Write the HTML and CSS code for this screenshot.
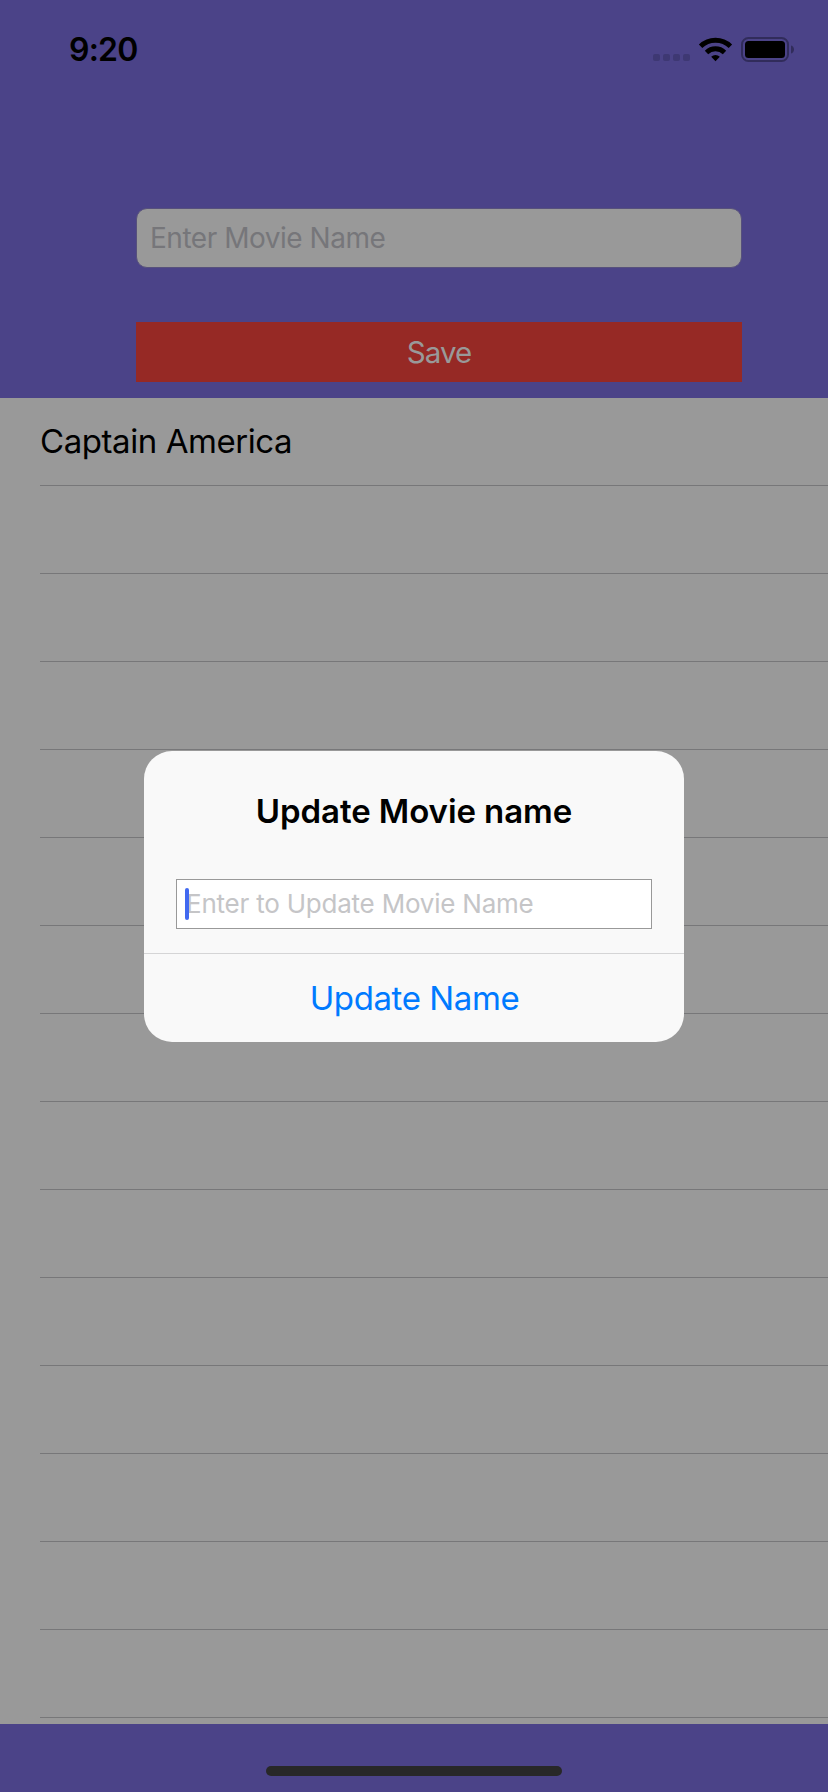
FILE: index.html
```html
<!DOCTYPE html>
<html lang="en">
<head>
<meta charset="utf-8">
<title>Movies</title>
<link rel="stylesheet" href="styles.css">
</head>
<body>
<div class="screen">
  <header class="header">
    <div class="status">
      <span class="time">9:20</span>
      <svg class="status-icons" width="142" height="26" viewBox="0 0 142 26">
        <g fill="#3e3873">
          <rect x="0" y="17" width="7" height="7" rx="2"/>
          <rect x="10" y="17" width="7" height="7" rx="2"/>
          <rect x="20" y="17" width="7" height="7" rx="2"/>
          <rect x="30" y="17" width="7" height="7" rx="2"/>
        </g>
        <g fill="none" stroke="#000" stroke-width="4.9">
          <path d="M47.6 9.3A21.3 21.3 0 0 1 77.4 9.3"/>
          <path d="M53.5 15.4A13 13 0 0 1 71.5 15.4"/>
        </g>
        <path d="M62.5 24.2L58.2 19.8A6.2 6.2 0 0 1 66.8 19.8Z" fill="#000"/>
        <rect x="89" y="1" width="46" height="23" rx="6.5" fill="none" stroke="#312c5b" stroke-width="2"/>
        <rect x="92" y="4" width="40" height="17" rx="3.5" fill="#000"/>
        <path d="M138 8.5C142 9.5 142 15.5 138 16.5Z" fill="#312c5b"/>
      </svg>
    </div>
    <div class="name-field"><span class="name-hint">Enter Movie Name</span></div>
    <div class="save"><span class="save-label">Save</span></div>
  </header>
  <main class="table">
    <div class="row"><span class="movie">Captain America</span></div>
    <div class="row"></div><div class="row"></div><div class="row"></div>
    <div class="row"></div><div class="row"></div><div class="row"></div>
    <div class="row"></div><div class="row"></div><div class="row"></div>
    <div class="row"></div><div class="row"></div><div class="row"></div>
    <div class="row"></div><div class="row"></div>
  </main>
  <footer class="footer"><div class="home"></div></footer>
  <section class="alert">
    <div class="alert-title"><span class="title-text">Update Movie name</span></div>
    <div class="alert-field"><i class="caret"></i><span class="alert-hint">Enter to Update Movie Name</span></div>
    <div class="alert-action"><span class="action-text">Update Name</span></div>
  </section>
</div>
</body>
</html>
```

FILE: styles.css
```css
* { box-sizing: border-box; }
body { margin: 0; font-family: Inter, "Liberation Sans", sans-serif; }
span { white-space: nowrap; }
.screen { position: relative; width: 828px; height: 1792px; display: flex; flex-direction: column; background: #4b4388; overflow: hidden; }
.header { height: 398px; display: flex; flex-direction: column; }
.status { height: 208px; padding: 30px 33px 0 69px; display: flex; justify-content: space-between; align-items: flex-start; }
.time { font-size: 32px; line-height: 39px; font-weight: 600; letter-spacing: -0.8px; color: #000; }
.status-icons { margin-top: 7px; }
.name-field { height: 60px; margin: 0 86px 0 136px; padding: 0 0 1px 13px; display: flex; align-items: center; border: 1px solid #57517c; border-radius: 11px; background: #999; }
.name-hint { font-size: 28px; letter-spacing: -0.47px; color: #76767a; }
.save { height: 60px; margin: 54px 86px 0 136px; display: flex; align-items: center; justify-content: center; background: #962925; }
.save-label { font-size: 29.5px; letter-spacing: -1px; color: #999; }
.table { height: 1326px; background: #999; overflow: hidden; }
.row { height: 88px; margin-left: 40px; border-bottom: 1px solid #777779; display: flex; align-items: center; }
.movie { padding-bottom: 2px; font-size: 33px; letter-spacing: -0.43px; color: #000; }
.footer { height: 68px; padding-top: 42px; display: flex; justify-content: center; }
.home { width: 296px; height: 10px; border-radius: 5px; background: #282828; }
.alert { position: absolute; left: 144px; top: 751px; width: 540px; height: 291px; border-radius: 28px; background: #f9f9f9; display: flex; flex-direction: column; }
.alert-title { height: 128px; padding-bottom: 8px; display: flex; align-items: center; justify-content: center; }
.title-text { font-size: 33px; font-weight: 600; letter-spacing: -0.08px; color: #000; }
.alert-field { position: relative; height: 50px; margin: 0 32px; padding: 0 0 1px 9px; display: flex; align-items: center; border: 1px solid #999; background: #fff; }
.caret { position: absolute; left: 8px; top: 8px; width: 4px; height: 32px; border-radius: 2px; background: #4169f0; }
.alert-hint { font-size: 26px; letter-spacing: -0.22px; color: #c5c5c7; }
.alert-action { height: 89px; margin-top: 24px; border-top: 1px solid #d5d5d6; display: flex; align-items: center; justify-content: center; }
.action-text { padding-left: 1px; font-size: 33px; letter-spacing: -0.4px; color: #007aff; }
```
